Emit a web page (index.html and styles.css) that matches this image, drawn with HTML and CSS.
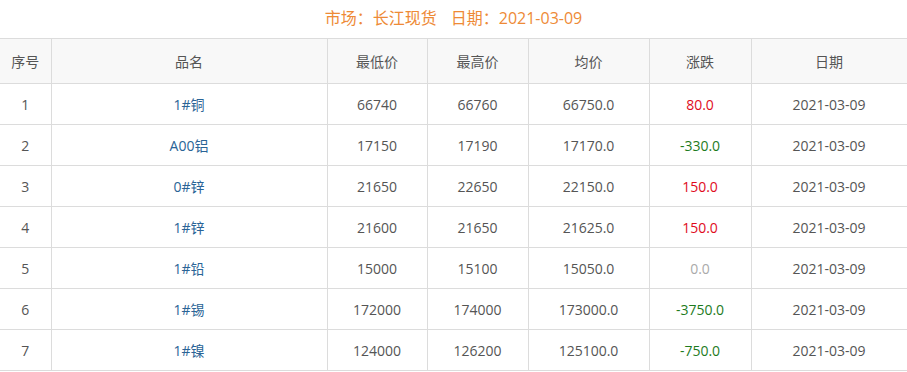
FILE: index.html
```html
<!DOCTYPE html>
<html lang="zh">
<head>
<meta charset="utf-8">
<link rel="stylesheet" href="styles.css">
</head>
<body>
<div class="title">市场：长江现货<span class="gap"></span>日期：2021-03-09</div>
<table class="price">
<colgroup>
<col class="c1"><col class="c2"><col class="c3"><col class="c4"><col class="c5"><col class="c6"><col class="c7">
</colgroup>
<thead>
<tr><th>序号</th><th>品名</th><th>最低价</th><th>最高价</th><th>均价</th><th>涨跌</th><th>日期</th></tr>
</thead>
<tbody>
<tr><td>1</td><td class="name">1#铜</td><td>66740</td><td>66760</td><td>66750.0</td><td class="up">80.0</td><td>2021-03-09</td></tr>
<tr><td>2</td><td class="name">A00铝</td><td>17150</td><td>17190</td><td>17170.0</td><td class="down">-330.0</td><td>2021-03-09</td></tr>
<tr><td>3</td><td class="name">0#锌</td><td>21650</td><td>22650</td><td>22150.0</td><td class="up">150.0</td><td>2021-03-09</td></tr>
<tr><td>4</td><td class="name">1#锌</td><td>21600</td><td>21650</td><td>21625.0</td><td class="up">150.0</td><td>2021-03-09</td></tr>
<tr><td>5</td><td class="name">1#铅</td><td>15000</td><td>15100</td><td>15050.0</td><td class="flat">0.0</td><td>2021-03-09</td></tr>
<tr><td>6</td><td class="name">1#锡</td><td>172000</td><td>174000</td><td>173000.0</td><td class="down">-3750.0</td><td>2021-03-09</td></tr>
<tr><td>7</td><td class="name">1#镍</td><td>124000</td><td>126200</td><td>125100.0</td><td class="down">-750.0</td><td>2021-03-09</td></tr>
</tbody>
</table>
</body>
</html>
```
FILE: styles.css
```css
html, body {
  margin: 0;
  padding: 0;
  background: #fff;
}
body {
  width: 907px;
  overflow: hidden;
  font-family: "Open Sans", "Noto Sans CJK SC", sans-serif;
  color: #555;
}
.title {
  height: 38px;
  line-height: 37px;
  text-align: center;
  font-size: 16px;
  color: #ee8a36;
  font-family: "Open Sans", "Noto Sans CJK TC", sans-serif;
  text-spacing-trim: space-all;
}
.gap {
  display: inline-block;
  width: 14px;
}
.price {
  border-collapse: collapse;
  table-layout: fixed;
  width: 907px;
  font-size: 14px;
}
.c1 { width: 51px; }
.c2 { width: 276px; }
.c3 { width: 100px; }
.c4 { width: 101px; }
.c5 { width: 121px; }
.c6 { width: 102px; }
.c7 { width: 156px; }
.price th, .price td {
  border: 1px solid #dcdcdc;
  text-align: center;
  padding: 0;
}
.price tr > :first-child { border-left: none; }
.price th {
  height: 44px;
  background: #f8f8f8;
  font-weight: normal;
  color: #555;
}
.price td {
  height: 40px;
}
.name { color: #2a6496; }
.up { color: #e00b1c; }
.down { color: #1e7b1e; }
.flat { color: #aaa; }
```
